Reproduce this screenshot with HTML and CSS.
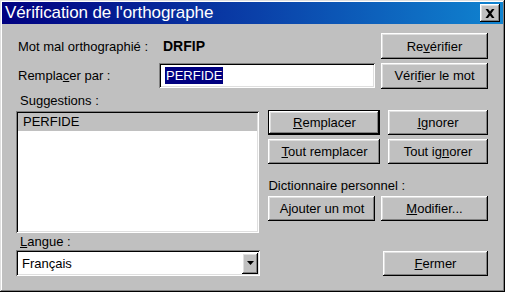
FILE: index.html
```html
<!DOCTYPE html>
<html lang="fr">
<head>
    <meta charset="UTF-8">
    <title>Vérification de l'orthographe</title>
    <link rel="stylesheet" href="styles.css">
</head>
<body>
    <div class="window">
        <div class="titlebar">
            <span class="title">Vérification de l'orthographe</span>
            <button class="close-btn" aria-label="Fermer">
                <svg width="10" height="9" viewBox="0 0 10 9">
                    <path d="M0.5 0h2.5l2 2.6L7 0h2.5L6.3 4.5 9.5 9H7L5 6.4 3 9H0.5l3.2-4.5z" fill="#000"/>
                </svg>
            </button>
        </div>

        <div class="body">
            <div class="row row-top">
                <span class="label">Mot mal orthographié :</span>
                <span class="word">DRFIP</span>
                <span class="spacer"></span>
                <button class="btn btn-side">Re<u>v</u>érifier</button>
            </div>
            <div class="row row-replace">
                <span class="label">Rempla<u>c</u>er par :</span>
                <div class="field replace-field"><span class="selected">PERFIDE</span></div>
                <span class="spacer"></span>
                <button class="btn btn-side">Véri<u>f</u>ier le mot</button>
            </div>

            <div class="label sugg-label">Su<u>g</u>gestions :</div>

            <div class="main">
                <div class="field listbox">
                    <div class="list-item">PERFIDE</div>
                </div>
                <div class="actions">
                    <div class="btn-row">
                        <button class="btn btn-default btn-wide"><u>R</u>emplacer</button>
                        <button class="btn btn-narrow"><u>I</u>gnorer</button>
                    </div>
                    <div class="btn-row">
                        <button class="btn btn-wide"><u>T</u>out remplacer</button>
                        <button class="btn btn-narrow">Tout ig<u>n</u>orer</button>
                    </div>
                    <div class="label dict-label">Dictionnaire personnel :</div>
                    <div class="btn-row dict-row">
                        <button class="btn btn-dict">A<u>j</u>outer un mot</button>
                        <button class="btn btn-dict"><u>M</u>odifier...</button>
                    </div>
                </div>
            </div>

            <div class="label lang-label"><u>L</u>angue :</div>
            <div class="row row-lang">
                <div class="field select">
                    <span class="select-value">Français</span>
                    <span class="select-arrow">
                        <svg width="7" height="4" viewBox="0 0 7 4"><path d="M0 0h7L3.5 4z" fill="#000"/></svg>
                    </span>
                </div>
                <span class="spacer"></span>
                <button class="btn btn-close"><u>F</u>ermer</button>
            </div>
        </div>
    </div>
</body>
</html>
```

FILE: styles.css
```css
body {
    margin: 0;
    background-color: #FFFFFF;
    font-family: 'Liberation Sans', Arial, sans-serif;
    font-size: 13px;
    color: #000000;
}
.window {
    width: 505px;
    height: 292px;
    box-sizing: border-box;
    background-color: #C0C0C0;
    padding: 2px;
    box-shadow: inset -1px -1px #000000, inset 1px 1px #DFDFDF, inset -2px -2px #808080, inset 2px 2px #FFFFFF;
}
.titlebar {
    height: 22px;
    display: flex;
    align-items: center;
    justify-content: space-between;
    padding: 0 3px 0 3px;
    background: linear-gradient(90deg, #000080 0%, #0A3FA8 50%, #1084D0 100%);
    color: #FFFFFF;
}
.title {
    font-size: 17px;
    letter-spacing: -0.1px;
}
.close-btn {
    width: 20px;
    height: 18px;
    padding: 0;
    border: none;
    background-color: #C0C0C0;
    display: flex;
    align-items: center;
    justify-content: center;
    box-shadow: inset -1px -1px #000000, inset 1px 1px #FFFFFF, inset -2px -2px #808080, inset 2px 2px #DFDFDF;
}
.body {
    padding: 9px 15px 0 14px;
}
.row {
    display: flex;
    align-items: center;
}
.spacer {
    flex: 1;
}
.label {
    white-space: nowrap;
}
.row .label {
    width: 141px;
    padding-left: 2px;
}
.word {
    font-weight: bold;
    font-size: 14px;
    padding-left: 4px;
}
.row-top {
    height: 26px;
}
.row-replace {
    height: 25px;
    margin-top: 4px;
}
.btn {
    font-family: 'Liberation Sans', Arial, sans-serif;
    font-size: 13px;
    color: #000000;
    background-color: #C0C0C0;
    border: none;
    padding: 0;
    height: 25px;
    box-shadow: inset -1px -1px #000000, inset 1px 1px #FFFFFF, inset -2px -2px #808080, inset 2px 2px #DFDFDF;
}
.btn-default {
    box-shadow: inset 0 0 0 1px #000000, inset -2px -2px #000000, inset 2px 2px #FFFFFF, inset -3px -3px #808080, inset 3px 3px #DFDFDF;
}
.btn-side {
    width: 107px;
    height: 26px;
}
.field {
    background-color: #FFFFFF;
    box-sizing: border-box;
    box-shadow: inset 1px 1px #808080, inset -1px -1px #FFFFFF, inset 2px 2px #000000, inset -2px -2px #DFDFDF;
}
.replace-field {
    width: 216px;
    height: 25px;
    display: flex;
    align-items: center;
    padding-left: 6px;
}
.selected {
    background-color: #000080;
    color: #FFFFFF;
    padding: 1px 1px;
    line-height: 15px;
}
.sugg-label {
    margin-top: 5px;
    padding-left: 4px;
    height: 17px;
}
.main {
    display: flex;
    gap: 9px;
}
.listbox {
    width: 244px;
    height: 122px;
    padding: 2px;
    margin-top: 1px;
}
.list-item {
    background-color: #C0C0C0;
    height: 18px;
    line-height: 18px;
    padding-left: 5px;
}
.actions {
    display: flex;
    flex-direction: column;
    width: 220px;
}
.btn-row {
    display: flex;
    justify-content: space-between;
    margin-bottom: 4px;
}
.btn-wide {
    width: 112px;
}
.btn-narrow {
    width: 100px;
}
.dict-label {
    margin-top: 8px;
    height: 20px;
    line-height: 20px;
}
.btn-dict {
    width: 107px;
}
.lang-label {
    margin-top: 1px;
    padding-left: 4px;
    height: 16px;
}
.row-lang {
    height: 26px;
}
.select {
    width: 244px;
    height: 26px;
    display: flex;
    align-items: center;
    padding: 2px;
}
.select-value {
    flex: 1;
    padding-left: 4px;
}
.select-arrow {
    width: 16px;
    height: 21px;
    display: flex;
    align-items: center;
    justify-content: center;
    background-color: #C0C0C0;
    box-shadow: inset -1px -1px #000000, inset 1px 1px #FFFFFF, inset -2px -2px #808080, inset 2px 2px #DFDFDF;
}
.btn-close {
    width: 105px;
}
```
